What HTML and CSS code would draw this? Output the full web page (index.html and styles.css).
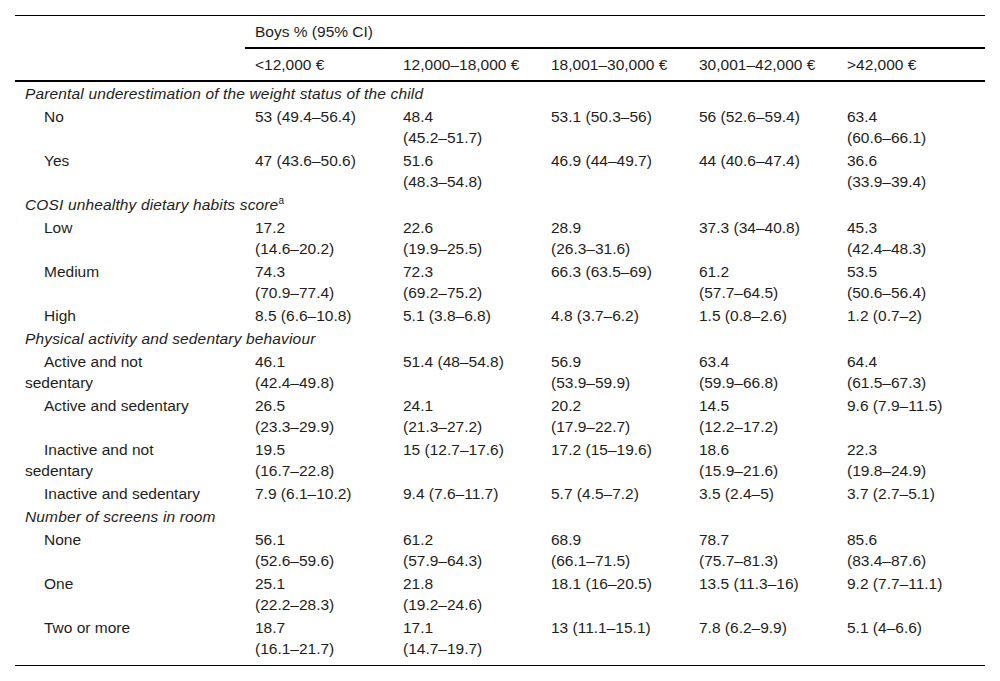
FILE: index.html
```html
<!DOCTYPE html>
<html>
<head>
<meta charset="utf-8">
<link rel="stylesheet" href="styles.css">
</head>
<body>
<table class="data">
  <colgroup>
    <col class="c-label">
    <col class="c-val"><col class="c-val"><col class="c-val"><col class="c-val"><col class="c-val">
  </colgroup>
  <thead>
    <tr class="h1">
      <th class="blank"></th>
      <th class="group" colspan="5">Boys % (95% CI)</th>
    </tr>
    <tr class="h2">
      <th></th>
      <th>&lt;12,000 €</th>
      <th>12,000–18,000 €</th>
      <th>18,001–30,000 €</th>
      <th>30,001–42,000 €</th>
      <th>&gt;42,000 €</th>
    </tr>
  </thead>
  <tbody>
    <tr class="sec"><td colspan="6">Parental underestimation of the weight status of the child</td></tr>
    <tr><td class="lbl">No</td><td>53 <span class="ci">(49.4–56.4)</span></td><td>48.4 <span class="ci">(45.2–51.7)</span></td><td>53.1 <span class="ci">(50.3–56)</span></td><td>56 <span class="ci">(52.6–59.4)</span></td><td>63.4 <span class="ci">(60.6–66.1)</span></td></tr>
    <tr><td class="lbl">Yes</td><td>47 <span class="ci">(43.6–50.6)</span></td><td>51.6 <span class="ci">(48.3–54.8)</span></td><td>46.9 <span class="ci">(44–49.7)</span></td><td>44 <span class="ci">(40.6–47.4)</span></td><td>36.6 <span class="ci">(33.9–39.4)</span></td></tr>
    <tr class="sec"><td colspan="6">COSI unhealthy dietary habits score<sup>a</sup></td></tr>
    <tr><td class="lbl">Low</td><td>17.2 <span class="ci">(14.6–20.2)</span></td><td>22.6 <span class="ci">(19.9–25.5)</span></td><td>28.9 <span class="ci">(26.3–31.6)</span></td><td>37.3 <span class="ci">(34–40.8)</span></td><td>45.3 <span class="ci">(42.4–48.3)</span></td></tr>
    <tr><td class="lbl">Medium</td><td>74.3 <span class="ci">(70.9–77.4)</span></td><td>72.3 <span class="ci">(69.2–75.2)</span></td><td>66.3 <span class="ci">(63.5–69)</span></td><td>61.2 <span class="ci">(57.7–64.5)</span></td><td>53.5 <span class="ci">(50.6–56.4)</span></td></tr>
    <tr><td class="lbl">High</td><td>8.5 <span class="ci">(6.6–10.8)</span></td><td>5.1 <span class="ci">(3.8–6.8)</span></td><td>4.8 <span class="ci">(3.7–6.2)</span></td><td>1.5 <span class="ci">(0.8–2.6)</span></td><td>1.2 <span class="ci">(0.7–2)</span></td></tr>
    <tr class="sec"><td colspan="6">Physical activity and sedentary behaviour</td></tr>
    <tr><td class="lbl">Active and not sedentary</td><td>46.1 <span class="ci">(42.4–49.8)</span></td><td>51.4 <span class="ci">(48–54.8)</span></td><td>56.9 <span class="ci">(53.9–59.9)</span></td><td>63.4 <span class="ci">(59.9–66.8)</span></td><td>64.4 <span class="ci">(61.5–67.3)</span></td></tr>
    <tr><td class="lbl">Active and sedentary</td><td>26.5 <span class="ci">(23.3–29.9)</span></td><td>24.1 <span class="ci">(21.3–27.2)</span></td><td>20.2 <span class="ci">(17.9–22.7)</span></td><td>14.5 <span class="ci">(12.2–17.2)</span></td><td>9.6 <span class="ci">(7.9–11.5)</span></td></tr>
    <tr><td class="lbl">Inactive and not sedentary</td><td>19.5 <span class="ci">(16.7–22.8)</span></td><td>15 <span class="ci">(12.7–17.6)</span></td><td>17.2 <span class="ci">(15–19.6)</span></td><td>18.6 <span class="ci">(15.9–21.6)</span></td><td>22.3 <span class="ci">(19.8–24.9)</span></td></tr>
    <tr><td class="lbl">Inactive and sedentary</td><td>7.9 <span class="ci">(6.1–10.2)</span></td><td>9.4 <span class="ci">(7.6–11.7)</span></td><td>5.7 <span class="ci">(4.5–7.2)</span></td><td>3.5 <span class="ci">(2.4–5)</span></td><td>3.7 <span class="ci">(2.7–5.1)</span></td></tr>
    <tr class="sec"><td colspan="6">Number of screens in room</td></tr>
    <tr><td class="lbl">None</td><td>56.1 <span class="ci">(52.6–59.6)</span></td><td>61.2 <span class="ci">(57.9–64.3)</span></td><td>68.9 <span class="ci">(66.1–71.5)</span></td><td>78.7 <span class="ci">(75.7–81.3)</span></td><td>85.6 <span class="ci">(83.4–87.6)</span></td></tr>
    <tr><td class="lbl">One</td><td>25.1 <span class="ci">(22.2–28.3)</span></td><td>21.8 <span class="ci">(19.2–24.6)</span></td><td>18.1 <span class="ci">(16–20.5)</span></td><td>13.5 <span class="ci">(11.3–16)</span></td><td>9.2 <span class="ci">(7.7–11.1)</span></td></tr>
    <tr class="last"><td class="lbl">Two or more</td><td>18.7 <span class="ci">(16.1–21.7)</span></td><td>17.1 <span class="ci">(14.7–19.7)</span></td><td>13 <span class="ci">(11.1–15.1)</span></td><td>7.8 <span class="ci">(6.2–9.9)</span></td><td>5.1 <span class="ci">(4–6.6)</span></td></tr>
  </tbody>
</table>
</body>
</html>
```

FILE: styles.css
```css
html, body {
  margin: 0;
  padding: 0;
  background: #fff;
}
body {
  padding: 15px;
  font-family: "Liberation Sans", Arial, sans-serif;
  font-size: 15.5px;
  color: #1e1e1e;
}
.data {
  width: 970px;
  table-layout: fixed;
  border-collapse: separate;
  border-spacing: 0;
  line-height: 21px;
}
.c-label { width: 230px; }
.c-val { width: 148px; }

.data th {
  font-weight: normal;
  text-align: left;
  white-space: nowrap;
  padding: 5px 10px;
  vertical-align: top;
}
.h1 th {
  border-top: 1px solid #000;
}
.h1 th.group {
  border-bottom: 2px solid #000;
}
.h2 th {
  border-bottom: 2px solid #000;
}
.data td {
  padding: 1px 31px 1px 10px;
  vertical-align: top;
  text-align: left;
}
.ci {
  white-space: nowrap;
}
.data td.lbl {
  padding-right: 37px;
  text-indent: 19px;
}
.sec td {
  font-style: italic;
  letter-spacing: 0.15px;
  padding-right: 10px;
}
.sec sup {
  font-style: normal;
  font-size: 10px;
  line-height: 0;
  vertical-align: 6px;
}
.last td {
  padding-bottom: 6px;
  border-bottom: 1px solid #000;
}
```
